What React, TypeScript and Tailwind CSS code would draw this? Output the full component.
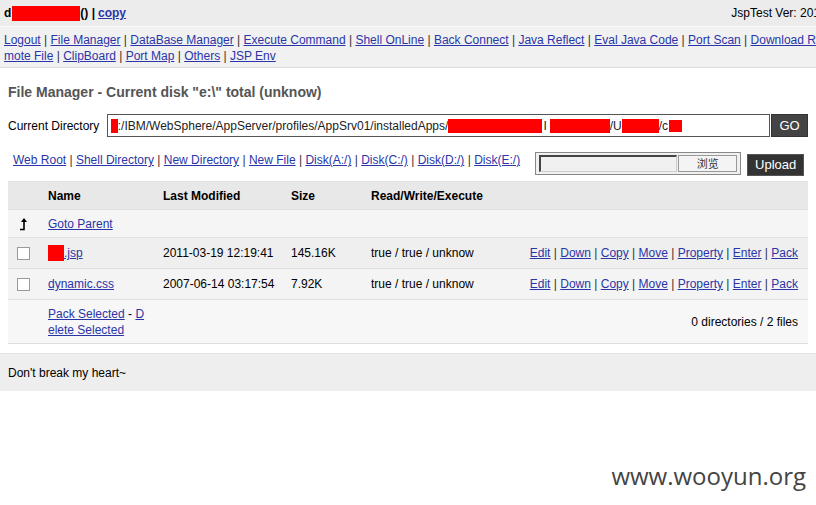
import React from "react";

const A = ({ children }: { children: React.ReactNode }) => (
  <a href="#" className="text-[#2a35a8] underline">{children}</a>
);

const Sep = () => <span className="text-[#333]"> | </span>;

function LinkList({ items }: { items: string[] }) {
  return (
    <>
      {items.map((t, i) => (
        <React.Fragment key={i}>
          {i > 0 && <Sep />}
          <A>{t}</A>
        </React.Fragment>
      ))}
    </>
  );
}

const Red = ({ w, h = 14, className = "" }: { w: number; h?: number; className?: string }) => (
  <span className={"inline-block bg-[#ff0000] align-middle " + className} style={{ width: w, height: h }} />
);

const Check = () => (
  <span className="inline-block w-[13px] h-[13px] border border-[#9a9a9a] bg-white" />
);

const ParentIcon = () => (
  <svg width="10" height="14" viewBox="0 0 10 14">
    <path d="M6 2 V12.5 H2" stroke="#000" strokeWidth="1.6" fill="none" />
    <path d="M3 5 L6 1 L9 5 Z" fill="#000" />
  </svg>
);

export default function App() {
  return (
    <div className="w-[816px] h-[505px] bg-white overflow-hidden text-[12px] text-black" style={{ fontFamily: '"Liberation Sans", Arial, sans-serif' }}>
      {/* top bar */}
      <div className="h-[26px] bg-[#ececec] flex items-center justify-between pl-[4px] whitespace-nowrap">
        <div className="font-bold flex items-center">
          <span>d</span>
          <Red w={68} h={15} className="ml-[1px]" />
          <span>() | </span>
          <span className="ml-[3px]"><A>copy</A></span>
        </div>
        <div className="mr-[-4px]">JspTest Ver: 201</div>
      </div>
      {/* nav */}
      <div className="border-t border-[#fafafa] border-b border-b-[#dcdcdc] bg-[#f1f1f1] pl-[4px] pt-[5px] pb-[3px] leading-[16px] whitespace-nowrap overflow-hidden">
        <div>
          <LinkList items={["Logout", "File Manager", "DataBase Manager", "Execute Command", "Shell OnLine", "Back Connect", "Java Reflect", "Eval Java Code", "Port Scan", "Download Re"]} />
        </div>
        <div>
          <LinkList items={["mote File", "ClipBoard", "Port Map", "Others", "JSP Env"]} />
        </div>
      </div>

      <div className="px-[8px]">
        <div className="mt-[15px] font-bold text-[14px] text-[#555] leading-[18px]">
          File Manager - Current disk "e:\" total (unknow)
        </div>
        <div className="mt-[13px] flex items-center">
          <span className="w-[99px]">Current Directory</span>
          <div className="w-[665px] h-[23px] border border-[#555] bg-white flex items-center pl-[3px] whitespace-nowrap overflow-hidden text-[#222]">
            <Red w={7} h={14} />
            <span>:/IBM/WebSphere/AppServer/profiles/AppSrv01/installedApps/</span>
            <Red w={94} h={14} />
            <span className="ml-[1px]">I</span>
            <Red w={60} h={14} className="ml-[3px]" />
            <span>/U</span>
            <Red w={37} h={14} />
            <span>/c</span>
            <Red w={13} h={12} className="ml-[1px]" />
          </div>
          <div className="w-[37px] h-[23px] bg-[#444] text-white flex items-center justify-center text-[13px] ml-[1px] border border-[#333]">GO</div>
        </div>
      </div>

      {/* tools row */}
      <div className="mx-[8px] mt-[8px] flex items-start h-[37px] border-b border-[#e2e2e2]">
        <div className="pl-[5px] pt-[8px] whitespace-nowrap leading-[14px]">
          <LinkList items={["Web Root", "Shell Directory", "New Directory", "New File", "Disk(A:/)", "Disk(C:/)", "Disk(D:/)", "Disk(E:/)"]} />
        </div>
        <div className="ml-[15px] mt-[7px] w-[206px] h-[23px] border border-[#888] bg-[#f0f0f0] flex items-center px-[3px] gap-[1px]">
          <div className="w-[138px] h-[17px] border-t-2 border-l-2 border-[#444] border-r border-b border-r-[#ccc] border-b-[#ccc] bg-[#f0f0f0]" />
          <div className="flex-1 h-[17px] border border-[#999] bg-[#f4f4f4] flex items-center justify-center text-[11px] text-[#333]" style={{ fontFamily: '"Noto Sans CJK SC", sans-serif' }}>浏览</div>
        </div>
        <div className="ml-[6px] mt-[9px] w-[57px] h-[22px] bg-[#333] border border-[#555] text-white text-[13px] flex items-center justify-center">Upload</div>
      </div>

      {/* table */}
      <div className="mx-[8px]">
        <div className="flex items-center h-[28px] bg-[#e8e8e8] border-b border-[#e0e0e0] font-bold">
          <div className="w-[40px]" />
          <div className="w-[115px]">Name</div>
          <div className="w-[128px]">Last Modified</div>
          <div className="w-[80px]">Size</div>
          <div>Read/Write/Execute</div>
        </div>
        <div className="flex items-center h-[28px] bg-[#f5f5f5] border-b border-[#e0e0e0]">
          <div className="w-[40px] pl-[10px] pt-[1px]"><ParentIcon /></div>
          <A>Goto Parent</A>
        </div>
        <div className="flex items-center h-[31px] bg-[#efefef] border-b border-[#dedede]">
          <div className="w-[40px] pl-[9px] flex items-center"><Check /></div>
          <div className="w-[115px] flex items-center">
            <Red w={16} h={16} />
            <A>.jsp</A>
          </div>
          <div className="w-[128px]">2011-03-19 12:19:41</div>
          <div className="w-[80px]">145.16K</div>
          <div className="flex-1">true / true / unknow</div>
          <div className="pr-[10px]"><LinkList items={["Edit", "Down", "Copy", "Move", "Property", "Enter", "Pack"]} /></div>
        </div>
        <div className="flex items-center h-[31px] bg-[#f4f4f4] border-b border-[#dedede]">
          <div className="w-[40px] pl-[9px] flex items-center"><Check /></div>
          <div className="w-[115px]"><A>dynamic.css</A></div>
          <div className="w-[128px]">2007-06-14 03:17:54</div>
          <div className="w-[80px]">7.92K</div>
          <div className="flex-1">true / true / unknow</div>
          <div className="pr-[10px]"><LinkList items={["Edit", "Down", "Copy", "Move", "Property", "Enter", "Pack"]} /></div>
        </div>
        <div className="flex items-center h-[44px] bg-[#f7f7f7] border-b border-[#dedede]">
          <div className="w-[40px]" />
          <div className="w-[110px] leading-[16px] whitespace-nowrap">
            <div><A>Pack Selected</A> - <A>D</A></div>
            <div><A>elete Selected</A></div>
          </div>
          <div className="flex-1 text-right pr-[10px]">0 directories / 2 files</div>
        </div>
      </div>

      {/* footer */}
      <div className="mt-[9px] h-[38px] bg-[#eeeeee] border-t border-[#e2e2e2] flex items-center pl-[8px]">
        Don't break my heart~
      </div>

      <div className="flex justify-end pr-[10px] mt-[69px]">
        <span className="text-[24px] text-[#444] leading-[32px]" style={{ fontFamily: '"Open Sans", sans-serif' }}>www.wooyun.org</span>
      </div>
    </div>
  );
}
